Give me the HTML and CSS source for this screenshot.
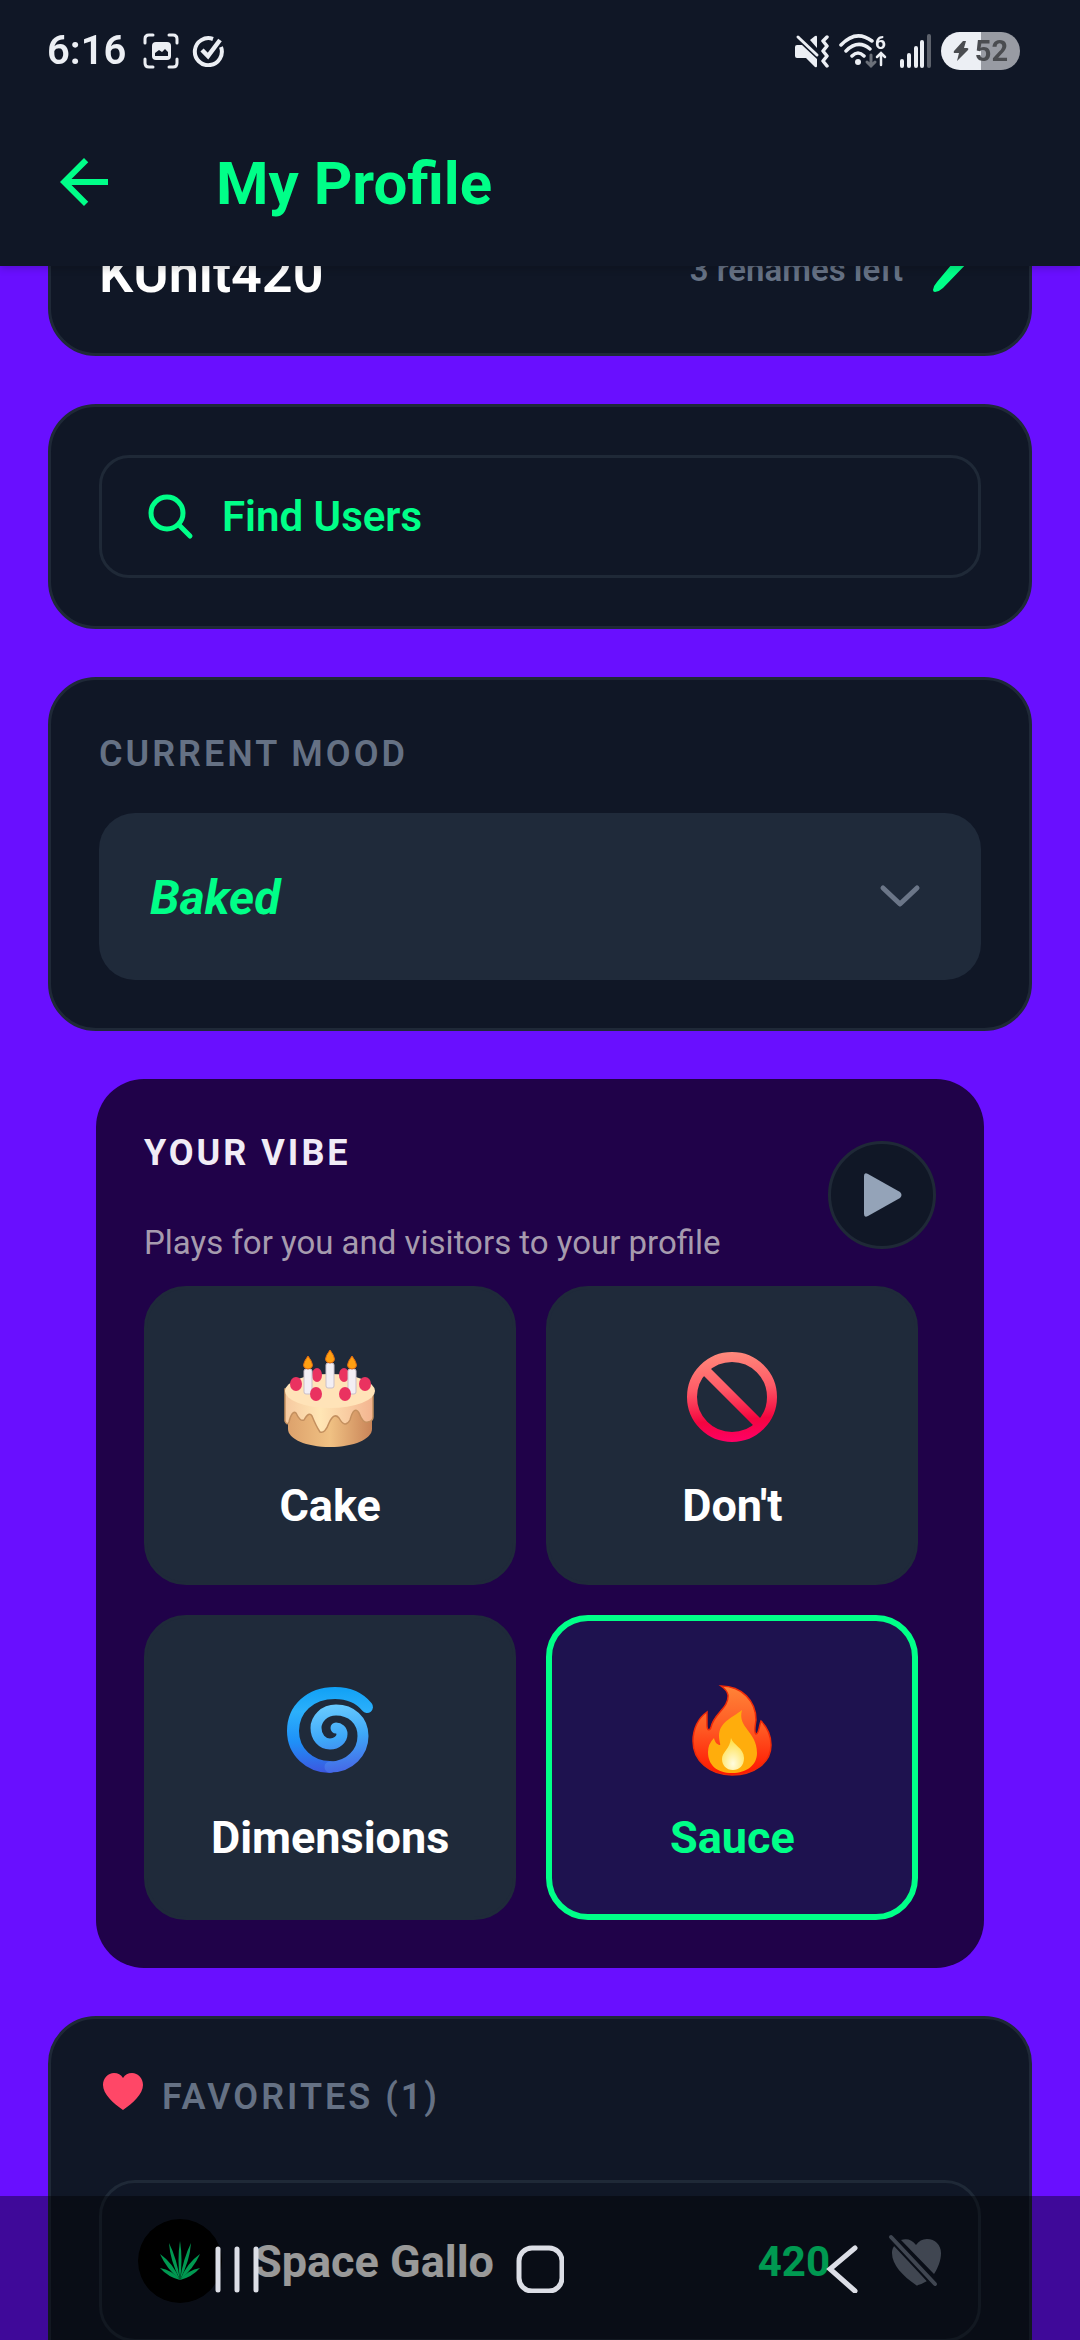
FILE: index.html
```html
<!DOCTYPE html>
<html lang="en">
<head>
    <meta charset="UTF-8">
    <meta name="viewport" content="width=device-width, initial-scale=1.0">
    <title>My Profile</title>
    <link rel="stylesheet" href="styles.css">
</head>
<body>
    <header class="top">
        <div class="status-bar">
            <div class="status-left">
                <span class="clock">6:16</span>
                <svg width="36" height="36" viewBox="0 0 36 36">
                    <path d="M2 10V6q0-4 4-4h4M26 2h4q4 0 4 4v4M34 26v4q0 4-4 4h-4M10 34H6q-4 0-4-4v-4" fill="none" stroke="#eceff4" stroke-width="3" stroke-linecap="round"/>
                    <rect x="9" y="9" width="19" height="18" rx="4" fill="#eceff4"/>
                    <path d="M12 23v-3l4-3 3 2 3-3 3 3v4z" fill="#111827"/>
                </svg>
                <svg width="32" height="32" viewBox="0 0 32 32" fill="none" stroke="#eceff4">
                    <path d="M21 4A13.500 13.500 0 1 0 29 12" stroke-width="4"/>
                    <path d="M10 15l6 6L28 5" stroke-width="4.500"/>
                </svg>
            </div>
            <div class="status-right">
                <svg width="36" height="34" viewBox="0 0 36 34">
                    <path d="M1 13q0-2 2-2h5L23 25v7q0 2-2 1l-9-9H3q-2 0-2-2zM16 6l5-4q2-1 2 1v11z" fill="#eceff4"/>
                    <path d="M4 3l19 18" stroke="#eceff4" stroke-width="3" stroke-linecap="round"/>
                    <path d="M33 3l-4 4 4 5-4 5 4 5-4 5 4 5" fill="none" stroke="#eceff4" stroke-width="3.500" stroke-linejoin="round" stroke-linecap="round"/>
                </svg>
                <svg width="52" height="40" viewBox="0 -3 52 40">
                    <g fill="none" stroke="#eceff4" stroke-width="3.500" stroke-linecap="round">
                        <path d="M2 11Q17-5 33 7M7 17Q19 5 31 15M13 22q6-6 12 0"/>
                        <path d="M42 31V20M38 23l4-4 4 4" stroke-width="2.500"/>
                    </g>
                    <circle cx="19" cy="28" r="3" fill="#eceff4"/>
                    <path d="M32 21v11M28 28l4 4 4-4" fill="none" stroke="#6b7079" stroke-width="3" stroke-linecap="round"/>
                    <text x="36" y="15" class="wifi-gen">6</text>
                </svg>
                <svg width="32" height="35" viewBox="0 0 32 35" stroke="#eceff4" stroke-width="4" stroke-linecap="round">
                    <path d="M2 28v5M9 22v11M16 15v18M22 9v24"/>
                    <path d="M29 3v30" stroke="#5d626c"/>
                </svg>
                <div class="battery">
                    <svg width="16" height="20" viewBox="0 0 16 20">
                        <path d="M10 0 1 10q-1 2 1 2h4l-2 8L15 9q1-2-1-2h-3l2-7z" fill="#4a4c50"/>
                    </svg>
                    <span>52</span>
                </div>
            </div>
        </div>
        <div class="toolbar">
            <button type="button" class="icon-button" aria-label="Back">
                <svg width="72" height="72" viewBox="0 0 24 24">
                    <path d="M20 11H7.830l5.590-5.590L12 4l-8 8 8 8 1.410-1.410L7.830 13H20v-2z" fill="#00ff88"/>
                </svg>
            </button>
            <h1>My Profile</h1>
        </div>
    </header>

    <main>
        <section class="card name-card">
            <span class="username">KUnit420</span>
            <span class="renames">3 renames left</span>
            <button type="button" class="icon-button" aria-label="Rename">
                <svg width="54" height="54" viewBox="0 0 54 54" fill="#00ff88">
                    <path d="M35 10l8 8L16 46q-3 3-8 4-2 0-2-2 1-5 4-8zM37 8l3-3q3-3 6 0l2 2q3 3 0 6l-3 3z"/>
                </svg>
            </button>
        </section>

        <section class="card">
            <button type="button" class="find-users">
                <svg width="48" height="48" viewBox="0 0 48 48" fill="none" stroke="#00ff88" stroke-width="5" stroke-linecap="round">
                    <circle cx="20" cy="20" r="16"/>
                    <path d="M32 32l11 11"/>
                </svg>
                Find Users
            </button>
        </section>

        <section class="card">
            <label class="section-label" for="mood">CURRENT MOOD</label>
            <div class="select-wrap">
                <select id="mood">
                    <option>Baked</option>
                </select>
                <svg class="chevron" width="42" height="42" viewBox="0 0 42 42">
                    <path d="M4 13l17 16 17-16" fill="none" stroke="#6b7688" stroke-width="5" stroke-linecap="round" stroke-linejoin="round"/>
                </svg>
            </div>
        </section>

        <section class="vibe">
            <div class="vibe-header">
                <div>
                    <h2 class="section-label">YOUR VIBE</h2>
                    <p>Plays for you and visitors to your profile</p>
                </div>
                <button type="button" class="play" aria-label="Play">
                    <svg width="48" height="48" viewBox="0 0 48 48">
                        <path d="M6 5q0-4 4-2l32 18q3 3 0 6L10 45q-4 2-4-2z" fill="#94a3b8"/>
                    </svg>
                </button>
            </div>
            <div class="vibe-grid">
                <button type="button" class="tile">
                    <svg width="120" height="120" viewBox="0 0 120 120">
                        <defs>
                            <linearGradient id="cakeSide" x1="0" x2="1">
                                <stop offset="0" stop-color="#f6c9a0"/>
                                <stop offset=".4" stop-color="#ffe6b5"/>
                                <stop offset="1" stop-color="#f3b490"/>
                            </linearGradient>
                            <linearGradient id="cakeBase" x1="0" x2="1">
                                <stop offset="0" stop-color="#dda26c"/>
                                <stop offset=".5" stop-color="#f0c183"/>
                                <stop offset="1" stop-color="#c98458"/>
                            </linearGradient>
                        </defs>
                        <path d="M18 74h84v18c0 10-18 18-42 18S18 102 18 92z" fill="url(#cakeBase)"/>
                        <path d="M15 52v32q2 5 4 1 3-12 7-9 4 9 8 7 5-9 8-4 4 10 8 16 5 2 9-9 5-11 10-5 6 11 11 2 4-15 9-7 4 11 9 9 5-1 5-5V52z" fill="url(#cakeSide)" stroke="#c4905f" stroke-width="1.500"/>
                        <ellipse cx="60" cy="54" rx="45" ry="17" fill="#ffe3b8"/>
                        <g fill="#ea3260">
                            <ellipse cx="47" cy="38" rx="5" ry="7"/>
                            <ellipse cx="74" cy="38" rx="5" ry="7"/>
                            <ellipse cx="26" cy="47" rx="6" ry="7"/>
                            <ellipse cx="95" cy="47" rx="6" ry="7"/>
                        </g>
                        <g fill="#f2eef4" stroke="#c9bfc9" stroke-width="1">
                            <rect x="56" y="26" width="8" height="25" rx="2"/>
                            <rect x="34" y="32" width="8" height="25" rx="2"/>
                            <rect x="78" y="32" width="8" height="25" rx="2"/>
                        </g>
                        <g fill="#ea3260">
                            <ellipse cx="46" cy="57" rx="6" ry="7"/>
                            <ellipse cx="75" cy="57" rx="6" ry="7"/>
                        </g>
                        <path d="M60 13q9 12 0 13-9-1 0-13zM38 19q9 12 0 13-9-1 0-13zM82 19q9 12 0 13-9-1 0-13z" fill="#ffa012" stroke="#e06a10" stroke-width="1"/>
                    </svg>
                    <span>Cake</span>
                </button>
                <button type="button" class="tile">
                    <svg width="120" height="120" viewBox="0 0 120 120">
                        <defs>
                            <linearGradient id="ban" gradientUnits="userSpaceOnUse" x1="55" y1="15" x2="62" y2="106">
                                <stop offset="0" stop-color="#ff8a7c"/>
                                <stop offset=".4" stop-color="#ff5a66"/>
                                <stop offset=".75" stop-color="#f4053f"/>
                                <stop offset="1" stop-color="#ff0068"/>
                            </linearGradient>
                        </defs>
                        <g fill="none" stroke="url(#ban)" stroke-width="10">
                            <circle cx="60" cy="60" r="40"/>
                            <path d="M33 33l53 53"/>
                        </g>
                    </svg>
                    <span>Don't</span>
                </button>
                <button type="button" class="tile">
                    <svg width="120" height="120" viewBox="0 0 120 120">
                        <defs>
                            <linearGradient id="swirl" gradientUnits="userSpaceOnUse" x1="60" y1="17" x2="60" y2="103">
                                <stop offset="0" stop-color="#0fa0f5"/>
                                <stop offset=".3" stop-color="#2cb0fb"/>
                                <stop offset=".65" stop-color="#1e90f8"/>
                                <stop offset="1" stop-color="#3c58e0"/>
                            </linearGradient>
                            <linearGradient id="swirlInner" gradientUnits="userSpaceOnUse" x1="60" y1="35" x2="70" y2="103">
                                <stop offset="0" stop-color="#6accff"/>
                                <stop offset=".5" stop-color="#3ea8f8"/>
                                <stop offset="1" stop-color="#4668e6"/>
                            </linearGradient>
                        </defs>
                        <g fill="none" stroke-width="12" stroke-linecap="round">
                            <path d="M97 38C88 27 76 24 65 24 40 24 23 40 23 62c0 21 17 36 37 36" stroke="url(#swirl)"/>
                            <path d="M60 98C80 98 93 83 93 67 93 51 81 41 66 41 54 41 46 50 46 59c0 9 6 16 14 16 7 0 12-5 12-10 0-4-3-6-6-6" stroke="url(#swirlInner)" stroke-width="11"/>
                        </g>
                    </svg>
                    <span>Dimensions</span>
                </button>
                <button type="button" class="tile selected">
                    <svg width="120" height="120" viewBox="0 0 120 120">
                        <defs>
                            <linearGradient id="flame" x1="0" y1="0" x2="0" y2="1">
                                <stop offset="0" stop-color="#ff8438"/>
                                <stop offset=".5" stop-color="#ff5722"/>
                                <stop offset="1" stop-color="#ff1500"/>
                            </linearGradient>
                            <radialGradient id="core" cx=".5" cy=".8" r=".7">
                                <stop offset="0" stop-color="#fffce0"/>
                                <stop offset="1" stop-color="#ffe04f"/>
                            </radialGradient>
                        </defs>
                        <path d="M49 17c21 0 35 15 35 34-1 6-2 13 0 14 3 0 3-8 5-13 6 6 10 15 10 24 0 18-17 30-39 30S21 92 21 72c0-12 5-23 14-29v13c0 6 3 6 4 2 3-14 18-19 17-32q-1-5-7-9z" fill="url(#flame)" stroke="#ee2a08" stroke-width="1.500"/>
                        <path d="M70 41c-5 18 15 21 15 43 0 12-10 20-25 20s-24-8-24-21q0-8 6-14c1 5 4 7 6 7 1 0-1-4-1-9 0-14 13-18 23-26z" fill="#ffad0c"/>
                        <path d="M59 69c2 7 13 10 13 20 0 8-5 12-11 12-7 0-11-5-11-11 0-7 8-10 9-21z" fill="url(#core)"/>
                    </svg>
                    <span>Sauce</span>
                </button>
            </div>
        </section>

        <section class="card">
            <h2 class="section-label favorites-label">
                <svg width="48" height="48" viewBox="0 0 48 48">
                    <path d="M24 43C14 36 4 27 4 18 4 11 9 6 15 6q6 0 9 5 3-5 9-5c6 0 11 5 11 12 0 9-10 18-20 25z" fill="#ff4767"/>
                </svg>
                FAVORITES (1)
            </h2>
            <div class="favorite">
                <div class="avatar">
                    <svg width="42" height="42" viewBox="0 0 42 42">
                        <g fill="#00ff88">
                            <path d="M21 40Q18 20 21 1q3 19 0 39z"/>
                            <path d="M21 40Q11 20 10 3q8 16 11 37z"/>
                            <path d="M21 40Q31 20 32 3q-8 16-11 37z"/>
                            <path d="M21 40Q7 28 1 14q13 9 20 26z"/>
                            <path d="M21 40Q35 28 41 14q-13 9-20 26z"/>
                            <path d="M21 40Q9 37 1 28q12 2 20 12z"/>
                            <path d="M21 40Q33 37 41 28q-12 2-20 12z"/>
                        </g>
                    </svg>
                </div>
                <span class="favorite-name">Space Gallo</span>
                <span class="favorite-score">420</span>
                <button type="button" class="icon-button" aria-label="Remove favorite">
                    <svg width="54" height="54" viewBox="0 0 54 54">
                        <path d="M28 51C15 42 4 31 4 19q0-5 3-8l32 36q-5 3-9 4-1 1-2 0zM46 40 13 6q9-3 15 5 4-6 11-6c8 0 14 6 14 14 0 7-3 15-7 21z" fill="#6b7688"/>
                        <path d="M3 3l44 47" stroke="#111827" stroke-width="8"/>
                        <path d="M3 3l44 47" stroke="#6b7688" stroke-width="4" stroke-linecap="round"/>
                    </svg>
                </button>
            </div>
        </section>
    </main>

    <nav class="system-nav">
        <button type="button" class="icon-button" aria-label="Recents">
            <svg width="48" height="48" viewBox="0 0 48 48" stroke="#dcdee6" stroke-width="5" stroke-linecap="round">
                <path d="M7 4v41M26 4v41M45 4v41"/>
            </svg>
        </button>
        <button type="button" class="icon-button" aria-label="Home">
            <svg width="48" height="48" viewBox="0 0 48 48">
                <rect x="3" y="3" width="43" height="43" rx="13" fill="none" stroke="#dcdee6" stroke-width="5"/>
            </svg>
        </button>
        <button type="button" class="icon-button" aria-label="Back">
            <svg width="48" height="48" viewBox="0 0 48 48">
                <path d="M34 3 9 24l25 22" fill="none" stroke="#dcdee6" stroke-width="5" stroke-linecap="round"/>
            </svg>
        </button>
    </nav>
</body>
</html>
```
FILE: styles.css
```css
* {
    box-sizing: border-box;
}
body {
    margin: 0;
    height: 100vh;
    overflow: hidden;
    font-family: Roboto, sans-serif;
    background-color: #690fff;
    color: #fff;
}
button {
    font: inherit;
    color: inherit;
    cursor: pointer;
}
svg {
    display: block;
    flex: none;
}
h1, h2, p {
    margin: 0;
}
.icon-button {
    padding: 0;
    border: none;
    background: none;
}

/* header */
.top {
    position: fixed;
    top: 0;
    left: 0;
    right: 0;
    z-index: 10;
    background-color: #101726;
    box-shadow: 0 2px 8px rgba(0, 0, 0, 0.2);
}
.status-bar {
    display: flex;
    justify-content: space-between;
    align-items: center;
    height: 98px;
    padding: 3px 60px 0 47px;
}
.status-left, .status-right {
    display: flex;
    align-items: center;
}
.status-left {
    gap: 13px;
}
.status-right {
    gap: 9px;
}
.clock {
    margin-right: 4px;
    font-size: 40px;
    font-weight: 600;
    color: #eceff4;
}
.wifi-gen {
    font-size: 19px;
    font-weight: 700;
    fill: #eceff4;
}
.battery {
    display: flex;
    align-items: center;
    justify-content: center;
    gap: 6px;
    width: 79px;
    height: 38px;
    border-radius: 19px;
    background: linear-gradient(to right, #eceff4 51%, #989ba3 51%);
    color: #4a4c50;
    font-size: 29px;
    font-weight: 700;
}
.toolbar {
    display: flex;
    align-items: center;
    gap: 96px;
    height: 168px;
    padding: 0 48px;
}
.toolbar h1 {
    padding-top: 4px;
    font-size: 60px;
    font-weight: 700;
    line-height: 72px;
    color: #00ff88;
}

/* cards */
main {
    display: flex;
    flex-direction: column;
    gap: 48px;
    padding: 191px 48px 48px;
}
.card {
    padding: 48px;
    border: 3px solid #1f2937;
    border-radius: 48px;
    background-color: #101726;
}
.section-label {
    display: block;
    font-size: 36px;
    font-weight: 600;
    line-height: 52px;
    letter-spacing: 3px;
    color: #657184;
}
.name-card {
    display: flex;
    align-items: flex-start;
}
.username {
    flex: 1;
    font-size: 54px;
    font-weight: 600;
    line-height: 63px;
}
.renames {
    margin-right: 24px;
    font-size: 33px;
    font-weight: 600;
    line-height: 56px;
    color: #657184;
}
.find-users {
    display: flex;
    align-items: center;
    gap: 27px;
    width: 100%;
    padding: 34px 45px;
    border: 3px solid #1f2937;
    border-radius: 30px;
    background: none;
    color: #00ff88;
    font-size: 42px;
    font-weight: 600;
    line-height: 49px;
}
.select-wrap {
    position: relative;
    margin-top: 33px;
}
.select-wrap select {
    display: block;
    width: 100%;
    height: 167px;
    padding: 2px 51px 0;
    appearance: none;
    border: none;
    border-radius: 36px;
    background-color: #1f2a3a;
    color: #00ff88;
    font-family: inherit;
    font-size: 48px;
    font-style: italic;
    font-weight: 700;
}
.chevron {
    position: absolute;
    top: 62px;
    right: 60px;
    pointer-events: none;
}

/* vibe */
.vibe {
    margin: 0 48px;
    padding: 48px;
    border-radius: 48px;
    background-color: #200249;
}
.vibe-header {
    display: flex;
    justify-content: space-between;
    align-items: center;
    margin-bottom: 24px;
}
.vibe-header .section-label {
    margin-bottom: 44px;
    font-weight: 700;
    color: #f1ecf6;
}
.vibe-header p {
    font-size: 33px;
    line-height: 39px;
    color: #a69bae;
}
.play {
    display: flex;
    align-items: center;
    justify-content: center;
    width: 108px;
    height: 108px;
    padding: 0;
    border: 3px solid #1f2937;
    border-radius: 50%;
    background-color: #101726;
}
.vibe-grid {
    display: grid;
    grid-template-columns: repeat(2, 47%);
    gap: 30px;
}
.tile {
    display: flex;
    flex-direction: column;
    align-items: center;
    justify-content: center;
    gap: 22px;
    padding: 48px 0 50px;
    border: 3px solid #1f2a3a;
    border-radius: 42px;
    background-color: #1f2a3a;
    font-size: 45px;
    font-weight: 700;
    line-height: 53px;
}
.tile.selected {
    border: 6px solid #00ff88;
    background-color: #1e124f;
    color: #00ff88;
}

/* favorites */
.favorites-label {
    display: flex;
    gap: 15px;
    margin-bottom: 53px;
    line-height: 60px;
}
.favorite {
    display: flex;
    align-items: center;
    padding: 36px;
    border: 3px solid #1f2937;
    border-radius: 36px;
}
.avatar {
    display: flex;
    align-items: center;
    justify-content: center;
    width: 84px;
    height: 84px;
    border-radius: 50%;
    background-color: #000;
}
.favorite-name {
    flex: 1;
    margin-left: 32px;
    font-size: 45px;
    font-weight: 700;
}
.favorite-score {
    margin-right: 58px;
    color: #00ff88;
    font-size: 42px;
    font-weight: 700;
}

/* system navigation */
.system-nav {
    position: fixed;
    right: 0;
    bottom: 0;
    left: 0;
    z-index: 10;
    display: flex;
    justify-content: space-between;
    align-items: center;
    height: 144px;
    padding: 2px 211px 0;
    background-color: rgba(0, 0, 0, 0.4);
}
```
